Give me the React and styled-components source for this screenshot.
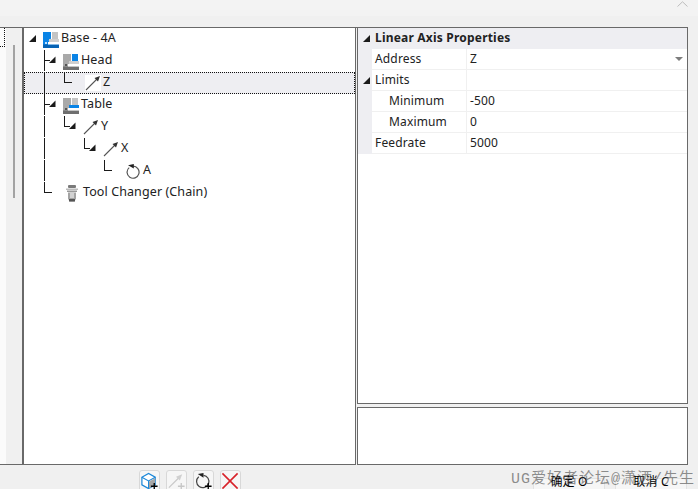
import React from "react";
import styled, { createGlobalStyle } from "styled-components";

const GlobalStyle = createGlobalStyle`
  html, body { margin: 0; padding: 0; background: #f0f0f0; overflow: hidden; }
`;

const treeRows = [
  { id: "base", label: "Base - 4A", guides: ["root"], icon: "base" },
  { id: "head", label: "Head", guides: ["blank", "tee"], icon: "head" },
  { id: "z", label: "Z", guides: ["blank", "pipe", "elbow"], icon: "arrow", selected: true },
  { id: "table", label: "Table", guides: ["blank", "tee"], icon: "table" },
  { id: "y", label: "Y", guides: ["blank", "pipe", "elbowOpen"], icon: "arrowY" },
  { id: "x", label: "X", guides: ["blank", "pipe", "blank", "elbowOpen"], icon: "arrowY" },
  { id: "a", label: "A", guides: ["blank", "pipe", "blank", "blank", "elbow"], icon: "rotary" },
  { id: "tool", label: "Tool Changer (Chain)", guides: ["blank", "elbow"], icon: "tool" },
];

const gridRows = [
  { label: "Address", value: "Z", dropdown: true },
  { label: "Limits", value: "", open: true },
  { label: "Minimum", value: "-500", nested: true },
  { label: "Maximum", value: "0", nested: true },
  { label: "Feedrate", value: "5000" },
];

const Guide = ({ kind }) => {
  if (kind === "blank") return <GuideCell />;
  if (kind === "root") return <GuideCell><RootExpander /></GuideCell>;
  return (
    <GuideCell>
      <svg width="20" height="22" viewBox="0 0 20 22">
        <g stroke="#1a1a1a" fill="none" shapeRendering="crispEdges">
          {kind === "pipe" && <path d="M.5 0v21" />}
          {kind === "tee" && <path d="M.5 0v21M0 10.5h6" />}
          {kind === "elbow" && <path d="M.5 0v10.5H8" />}
          {kind === "elbowOpen" && <path d="M.5 0v10.5H6" />}
        </g>
        {kind === "tee" && <path d="M5 13h6.500V6.500z" fill="#1a1a1a" />}
        {kind === "elbowOpen" && <path d="M5 13h6.500V6.500z" fill="#1a1a1a" />}
      </svg>
    </GuideCell>
  );
};

const MachineIcon = ({ kind }) => {
  const blue = "#0a84e6";
  const grey = "#a9a9a9";
  return (
    <svg width="16" height="17" viewBox="0 0 16 17">
      <path d="M0 1h8v6q0 3-3 3h11v7H0z" fill={kind === "base" ? blue : grey} />
      <rect x="0" y="13.500" width="16" height="3.500" fill={kind === "base" ? "#0763b4" : "#6f6f6f"} />
      <rect x="9" y="1" width="6" height="7" fill={kind === "head" ? blue : "#c4c4c4"} />
      <rect x="6" y="8" width="10" height="3" fill={kind === "table" ? blue : "#cfcfcf"} />
      <rect x="5" y="11" width="11" height="2.500" fill="#fff" />
      <rect x="2" y="11" width="2" height="2" fill={kind === "base" ? "#bfe0ff" : "#555"} />
    </svg>
  );
};

const ArrowIcon = () => (
  <svg width="16" height="16" viewBox="0 0 16 16">
    <path d="M1 15 12 4" stroke="#555" strokeWidth="1.1" fill="none" />
    <path d="M15 1 9.500 3 13 6.500z" fill="#333" />
  </svg>
);

const RotaryIcon = () => (
  <svg width="14" height="16" viewBox="0 0 14 16">
    <path d="M3.200 4.600A6 6 0 1 0 7 3.200" stroke="#555" strokeWidth="1.2" fill="none" />
    <path d="M2 2.200 7.800 1v4.600z" fill="#222" />
  </svg>
);

const ToolIcon = () => (
  <svg width="12" height="17" viewBox="0 0 12 17">
    <rect x="2" y="0" width="8" height="3" rx="1" fill="#7a7a7a" />
    <rect x="0" y="3.500" width="12" height="1.500" fill="#bbb" />
    <rect x="1" y="5.500" width="10" height="1.500" fill="#999" />
    <path d="M2 7.500h8v6l-1.500 3h-5L2 13.500z" fill="#a4a4a4" />
    <rect x="4" y="8" width="4" height="5" fill="#d2d2d2" />
    <rect x="3" y="14" width="6" height="2.500" fill="#555" />
  </svg>
);

const NodeIcon = ({ kind }) => {
  if (kind === "arrow") return <IconSlot $white $left={1} $right={2}><ArrowIcon /></IconSlot>;
  if (kind === "arrowY") return <IconSlot $left={-1} $right={2}><ArrowIcon /></IconSlot>;
  if (kind === "rotary") return <IconSlot $left={2} $right={3}><RotaryIcon /></IconSlot>;
  if (kind === "tool") return <IconSlot $left={2} $right={5}><ToolIcon /></IconSlot>;
  return <IconSlot $left={-1} $right={2}><MachineIcon kind={kind} /></IconSlot>;
};

const PlusMark = () => <path d="M15 12v7M11.500 15.500h7" stroke="#000" strokeWidth="1.4" fill="none" />;

const tools = [
  {
    id: "cube",
    icon: (
      <>
        <path d="M2 6 9 2l7 4v8l-7 4-7-4z" fill="#fff" stroke="#1b87d8" strokeWidth="1.3" />
        <path d="M2 6l7 4 7-4M9 10v8" stroke="#1b87d8" strokeWidth="1.1" fill="none" />
        <path d="M9.500 10.500 16 7v6l-3 3-3.500 2z" fill="#a6a6a6" />
        <PlusMark />
      </>
    ),
  },
  {
    id: "axis",
    icon: (
      <>
        <path d="M2 17 13 6" stroke="#c9c9c9" strokeWidth="1.3" fill="none" />
        <path d="M16 3 9.500 5.500l4 4z" fill="#d0d0d0" />
        <path d="M15 12v7M11.500 15.500h7" stroke="#c6c6c6" strokeWidth="1.4" fill="none" />
      </>
    ),
  },
  {
    id: "rotary",
    icon: (
      <>
        <path d="M5 5.500a6.500 6.500 0 1 0 5-1.500" stroke="#444" strokeWidth="1.3" fill="none" />
        <path d="M4 2.500 10 1.500v5z" fill="#222" />
        <PlusMark />
      </>
    ),
  },
  {
    id: "delete",
    icon: <path d="M1.500 2l16 16M17.500 2l-16 16" stroke="#d8222a" strokeWidth="1.7" fill="none" />,
  },
];

export default function App() {
  return (
    <Window>
      <GlobalStyle />
      <TitleBar>
        <svg width="11" height="6" viewBox="0 0 11 6">
          <path d="M.5 5.500 5.500.8l5 4.700" stroke="#bdbdbd" fill="none" />
        </svg>
      </TitleBar>
      <Body>
        <SidePanel>
          <SideList>
            <SideItem />
          </SideList>
          <SideTrack>
            <SideThumb />
          </SideTrack>
        </SidePanel>
        <TreePanel>
          {treeRows.map((row) => (
            <TreeRow key={row.id} $selected={row.selected}>
              {row.guides.map((kind, i) => (
                <Guide key={i} kind={kind} />
              ))}
              <NodeIcon kind={row.icon} />
              <NodeLabel>{row.label}</NodeLabel>
            </TreeRow>
          ))}
        </TreePanel>
        <RightColumn>
          <PropertyPanel>
            <GroupHeader>
              <Gutter>
                <Expander />
              </Gutter>
              <GroupTitle>Linear Axis Properties</GroupTitle>
            </GroupHeader>
            {gridRows.map((row) => (
              <GridRow key={row.label}>
                <Gutter>{row.open && <Expander />}</Gutter>
                <GridLabel $nested={row.nested}>{row.label}</GridLabel>
                <GridValue>
                  {row.value}
                  {row.dropdown && <DropArrow />}
                </GridValue>
              </GridRow>
            ))}
          </PropertyPanel>
          <HelpPanel />
        </RightColumn>
      </Body>
      <Footer>
        <ToolGroup>
          {tools.map((tool) => (
            <ToolButton key={tool.id}>
              <svg width="20" height="20" viewBox="0 0 20 20">
                {tool.icon}
              </svg>
            </ToolButton>
          ))}
        </ToolGroup>
        <Actions>
          <ActionButton>
            <span>确定 O</span>
          </ActionButton>
          <ActionButton>
            <span>取消 C</span>
          </ActionButton>
        </Actions>
        <Watermark>UG爱好者论坛@潇洒/先生</Watermark>
      </Footer>
    </Window>
  );
}

const Window = styled.div`
  position: relative;
  width: 698px;
  height: 489px;
  display: flex;
  flex-direction: column;
  overflow: hidden;
  background: #f0f0f0;
  font-family: "Noto Sans", "Noto Sans CJK SC", sans-serif;
  font-size: 12px;
  letter-spacing: 0.15px;
  color: #222;
`;

const TitleBar = styled.div`
  height: 27px;
  flex: none;
  display: flex;
  justify-content: flex-end;
  align-items: flex-start;
  padding: 1px 10px 0 0;
  box-sizing: border-box;
  background: linear-gradient(#f3f3f3 0 16px, #f0f0f0 16px);
`;

const Body = styled.div`
  height: 438px;
  flex: none;
  display: flex;
  margin-right: 10px;
  border-top: 1px solid #696969;
  box-sizing: border-box;
`;

const SidePanel = styled.div`
  width: 22px;
  flex: none;
  display: flex;
  border-bottom: 1px solid #696969;
`;

const SideList = styled.div`
  width: 6px;
  flex: none;
  background: #fbfbfb;
`;

const SideItem = styled.div`
  width: 5px;
  height: 19px;
  box-sizing: border-box;
  border-right: 1px dotted #111;
  border-bottom: 1px dotted #111;
`;

const SideTrack = styled.div`
  flex: 1;
  padding: 17px 0 0 7px;
`;

const SideThumb = styled.div`
  width: 2px;
  height: 153px;
  background: #a3a3a3;
`;

const TreePanel = styled.div`
  width: 334px;
  flex: none;
  box-sizing: border-box;
  background: #fff;
  border-left: 2px solid #696969;
  border-right: 1px solid #696969;
  border-bottom: 1px solid #696969;
`;

const TreeRow = styled.div`
  height: 22px;
  box-sizing: border-box;
  display: flex;
  align-items: center;
  background: ${(p) => (p.$selected ? "#eeeef2" : "transparent")};
  outline: ${(p) => (p.$selected ? "1px dotted #111" : "none")};
  outline-offset: -1px;
`;

const GuideCell = styled.div`
  position: relative;
  width: 20px;
  height: 22px;
  flex: none;
  svg {
    display: block;
  }
`;

const RootExpander = styled.div`
  position: absolute;
  left: 5px;
  top: 7px;
  width: 7px;
  height: 7px;
  background: #1a1a1a;
  clip-path: polygon(100% 0, 100% 100%, 0 100%);
`;

const IconSlot = styled.span`
  display: flex;
  flex: none;
  background: ${(p) => (p.$white ? "#fff" : "transparent")};
  margin-left: ${(p) => p.$left}px;
  margin-right: ${(p) => p.$right}px;
`;

const NodeLabel = styled.span`
  white-space: nowrap;
  font-size: 12.5px;
  letter-spacing: 0.1px;
  line-height: 20px;
  padding-bottom: 2px;
`;

const RightColumn = styled.div`
  width: 331px;
  margin-left: 1px;
  flex: none;
  display: flex;
  flex-direction: column;
  gap: 3px;
`;

const PropertyPanel = styled.div`
  height: 376px;
  flex: none;
  box-sizing: border-box;
  background: #fff;
  border: 1px solid #696969;
  border-top: 0;
`;

const HelpPanel = styled.div`
  height: 58px;
  flex: none;
  box-sizing: border-box;
  background: #fff;
  border: 1px solid #696969;
`;

const GroupHeader = styled.div`
  height: 21px;
  display: flex;
  align-items: center;
  background: #eeeef2;
`;

const Gutter = styled.div`
  width: 14px;
  height: 100%;
  flex: none;
  display: flex;
  align-items: center;
  padding-left: 5px;
  box-sizing: border-box;
  background: #eeeef2;
`;

const Expander = styled.div`
  width: 7px;
  height: 7px;
  background: #1a1a1a;
  clip-path: polygon(100% 0, 100% 100%, 0 100%);
`;

const GroupTitle = styled.span`
  padding: 0 0 2px 3px;
  font-weight: 700;
  letter-spacing: 0.2px;
  white-space: nowrap;
`;

const GridRow = styled.div`
  height: 21px;
  display: flex;
  align-items: center;
  box-sizing: border-box;
`;

const GridLabel = styled.div`
  width: 95px;
  height: 100%;
  flex: none;
  box-sizing: border-box;
  padding-left: ${(p) => (p.$nested ? 17 : 3)}px;
  line-height: 20px;
  border-right: 1px solid #f0f0f0;
  border-bottom: 1px solid #f0f0f0;
`;

const GridValue = styled.div`
  flex: 1;
  height: 100%;
  box-sizing: border-box;
  display: flex;
  justify-content: space-between;
  align-items: center;
  padding: 0 4px 1px 3px;
  border-bottom: 1px solid #f0f0f0;
`;

const DropArrow = styled.span`
  width: 0;
  height: 0;
  border-left: 4px solid transparent;
  border-right: 4px solid transparent;
  border-top: 4px solid #7d7d7d;
`;

const Footer = styled.div`
  flex: 1;
  display: flex;
  padding-left: 139px;
  min-height: 0;
`;

const ToolGroup = styled.div`
  display: flex;
  gap: 6px;
  padding-top: 5px;
`;

const ToolButton = styled.div`
  width: 21px;
  height: 24px;
  flex: none;
  box-sizing: border-box;
  background: #f6f6f6;
  border: 1px solid #d8d8d8;
  border-radius: 3px;
  display: flex;
  justify-content: center;
`;

const Actions = styled.div`
  margin-left: auto;
  display: flex;
  gap: 10px;
  padding: 13px 11px 0 0;
`;

const ActionButton = styled.div`
  width: 72px;
  height: 30px;
  box-sizing: border-box;
  border: 1px solid #e2e2e2;
  border-radius: 3px;
  background: #f6f6f6;
  color: #000;
  display: flex;
  justify-content: center;
  span {
    margin-top: -5px;
    line-height: 16px;
    white-space: nowrap;
    font-size: 12px;
  }
`;

const Watermark = styled.div`
  position: absolute;
  right: 3px;
  bottom: -1px;
  font-family: "Liberation Mono", "Noto Sans CJK SC", monospace;
  font-size: 15px;
  letter-spacing: 1px;
  line-height: 20px;
  color: rgba(70, 70, 70, 0.6);
  white-space: nowrap;
`;
